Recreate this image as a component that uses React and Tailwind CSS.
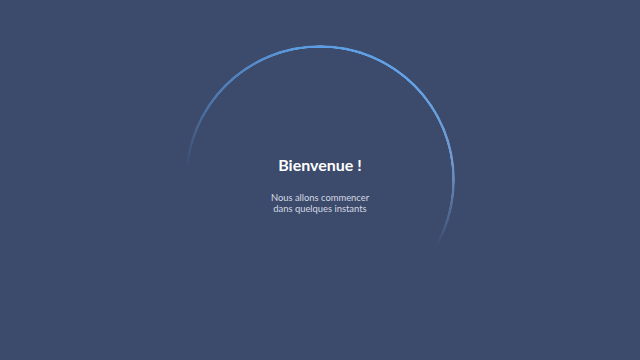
import React from "react";

export default function App() {
  return (
    <div className="w-[640px] h-[360px] bg-[#3c4a6b] flex items-center justify-center font-['Lato','Noto_Sans',sans-serif]">
      <div className="relative w-[270px] h-[270px] flex flex-col items-center justify-center">
        <div className="absolute inset-0 rounded-full bg-[conic-gradient(from_270deg,rgba(100,160,230,0)_0deg,rgba(100,160,230,0)_4deg,rgba(95,158,228,0.55)_38deg,#5b9be0_80deg,#62a3e8_130deg,rgba(130,180,240,0.75)_172deg,rgba(130,180,240,0)_210deg,rgba(130,180,240,0)_360deg)] [mask-image:radial-gradient(farthest-side,transparent_calc(100%_-_3px),#000_calc(100%_-_2.5px))]" />
        <div className="flex flex-col items-center pt-[8px]">
          <div className="text-white font-bold text-[16px] leading-[20px]">Bienvenue !</div>
          <div className="mt-[17px] text-[#d3d9e4] text-[9.4px] leading-[11px] text-center">
            Nous allons commencer
            <br />
            dans quelques instants
          </div>
        </div>
      </div>
    </div>
  );
}
